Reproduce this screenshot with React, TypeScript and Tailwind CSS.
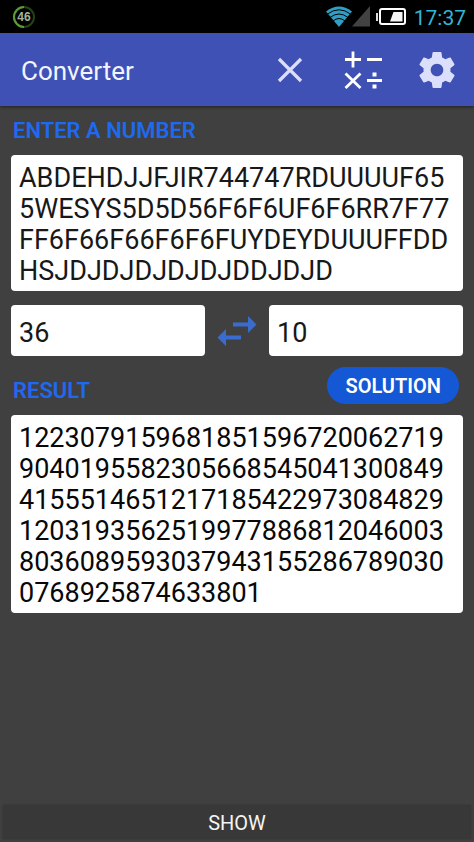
import { useState } from "react";

const NUMBER_TEXT =
  "ABDEHDJJFJIR744747RDUUUUF655WESYS5D5D56F6F6UF6F6RR7F77FF6F66F66F6F6FUYDEYDUUUFFDDHSJDJDJDJDJDJDDJDJD";
const RESULT_TEXT =
  "1223079159681851596720062719904019558230566854504130084941555146512171854229730848291203193562519977886812046003803608959303794315528678903007689258746338" +
  "01";

function StatusBar() {
  return (
    <div className="flex h-[33px] shrink-0 items-center justify-between bg-black pr-2 pl-3">
      <svg className="size-6" viewBox="0 0 24 24" role="img" aria-label="46 percent">
        <circle cx="12" cy="12" r="10" fill="none" stroke="#234315" strokeWidth="2" />
        <path d="M12 22a10 10 0 0 1 0-20" fill="none" stroke="#5c9c34" strokeWidth="2" />
        <text
          x="12"
          y="16"
          textAnchor="middle"
          className="fill-[#a3b596] font-['Liberation_Sans',sans-serif] text-[12px] font-bold"
        >
          46
        </text>
      </svg>
      <div className="flex items-center">
        <svg className="h-[22px] w-[26px]" viewBox="0 0 26 22" aria-hidden="true">
          <path d="M0 5.500Q13-4.500 26 5.500L13 21Z" fill="#2f9dc4" />
          <path
            d="M1.500 8Q13-.5 24.500 8M4 11.500Q13 4.500 22 11.500M7 15Q13 10 19 15"
            fill="none"
            stroke="#000"
            strokeWidth="1"
          />
        </svg>
        <svg className="h-[22px] w-[18px]" viewBox="0 0 18 22" aria-hidden="true">
          <path d="M18 0V20.500H0Z" fill="#424242" />
        </svg>
        <svg className="ml-1.5 h-[17px] w-[30px]" viewBox="0 0 30 17" aria-hidden="true">
          <path d="M1 5v8" stroke="#ddd" strokeWidth="2" />
          <rect x="4" y="1" width="25" height="15" rx="2" fill="none" stroke="#fff" strokeWidth="2" />
          <path d="M17.500 4H26.500V13.500H14Z" fill="#f4f4f4" />
        </svg>
        <span className="ml-2 pt-0.5 text-[21px] leading-8 text-[#33b5d8]">17:37</span>
      </div>
    </div>
  );
}

function Header({ onClear }: { onClear: () => void }) {
  return (
    <header className="z-10 flex h-[73px] shrink-0 items-center bg-[#4051b5] pr-[19px] pl-[21px] shadow-[0_1px_3px_rgba(0,0,0,0.5)]">
      <h1 className="flex-1 pt-0.5 text-[26px] leading-8 text-[#f2f5ff]">Converter</h1>
      <button type="button" aria-label="Clear" onClick={onClear} className="mr-[41px]">
        <svg className="size-[26px]" viewBox="0 0 26 26" aria-hidden="true">
          <path d="M2 2 24 24M24 2 2 24" stroke="#dcdffc" strokeWidth="3.200" />
        </svg>
      </button>
      <button type="button" aria-label="Calculator" className="mr-9">
        <svg className="h-[38px] w-[39px]" viewBox="0 0 39 38" aria-hidden="true">
          <path
            d="M1 8.500H17M9 .5V16.500M23 8.500H38M1.500 22.500 16.500 37M16.500 22.500 1.500 37M23 29.500H38"
            stroke="#fff"
            strokeWidth="2.800"
          />
          <path d="M28.500 21.500h4v4h-4zM28.500 33.500h4v4h-4z" fill="#fff" />
        </svg>
      </button>
      <button type="button" aria-label="Settings">
        <svg className="size-[36px]" viewBox="2 2 20 20" aria-hidden="true">
          <path
            fill="#dcdffc"
            d="M19.430 12.980c.04-.32.07-.64.07-.98s-.03-.66-.07-.98l2.110-1.650c.19-.15.24-.42.12-.64l-2-3.460c-.12-.22-.39-.3-.61-.22l-2.490 1c-.52-.4-1.080-.73-1.690-.98l-.38-2.650C14.460 2.180 14.250 2 14 2h-4c-.25 0-.46.18-.49.42l-.38 2.650c-.61.25-1.170.59-1.690.98l-2.490-1c-.23-.09-.49 0-.61.22l-2 3.460c-.13.22-.07.49.12.64l2.110 1.650c-.04.32-.07.65-.07.98s.03.66.07.98l-2.110 1.650c-.19.15-.24.42-.12.64l2 3.460c.12.22.39.3.61.22l2.490-1c.52.4 1.080.73 1.690.98l.38 2.650c.03.24.24.42.49.42h4c.25 0 .46-.18.49-.42l.38-2.650c.61-.25 1.170-.59 1.690-.98l2.490 1c.23.09.49 0 .61-.22l2-3.460c.12-.22.07-.49-.12-.64l-2.110-1.650zM12 15.500c-1.930 0-3.500-1.570-3.500-3.500s1.570-3.500 3.500-3.500 3.500 1.570 3.500 3.500-1.570 3.500-3.500 3.500z"
          />
        </svg>
      </button>
    </header>
  );
}

export default function App() {
  const [value, setValue] = useState(NUMBER_TEXT);
  const [from, setFrom] = useState("36");
  const [to, setTo] = useState("10");

  const swap = () => {
    setFrom(to);
    setTo(from);
  };

  return (
    <div className="flex min-h-screen flex-col bg-[#404040] font-[Roboto,sans-serif]">
      <StatusBar />
      <Header onClear={() => setValue("")} />
      <main className="flex flex-1 flex-col px-[11px]">
        <label
          htmlFor="number"
          className="flex h-[49px] items-center pl-0.5 text-[22px] leading-7 font-semibold text-[#1f69f0]"
        >
          ENTER A NUMBER
        </label>
        <textarea
          id="number"
          rows={4}
          value={value}
          spellCheck={false}
          onChange={(e) => setValue(e.target.value)}
          className="block w-full resize-none overflow-hidden rounded bg-white px-2 pt-2 pb-1 text-[27px] leading-[31px] break-all text-[#181818] outline-none"
        />
        <div className="mt-3.5 flex items-center">
          <input
            aria-label="From base"
            value={from}
            onChange={(e) => setFrom(e.target.value)}
            className="h-[51px] min-w-0 flex-1 rounded bg-white px-2 pt-1 text-[27px] text-[#181818] outline-none"
          />
          <button type="button" aria-label="Swap bases" onClick={swap} className="mx-3">
            <svg className="h-[30px] w-10" viewBox="0 0 40 30" aria-hidden="true">
              <path d="M16 6.500H31V0L39.500 8.500 31 17V10.500H16ZM24 19.500H9V13L.5 21.500 9 30V23.500H24Z" fill="#3a6cd0" />
            </svg>
          </button>
          <input
            aria-label="To base"
            value={to}
            onChange={(e) => setTo(e.target.value)}
            className="h-[51px] min-w-0 flex-1 rounded bg-white px-2 pt-1 text-[27px] text-[#181818] outline-none"
          />
        </div>
        <div className="flex h-[59px] items-center justify-between pr-1 pl-0.5">
          <label
            htmlFor="result"
            className="pt-2.5 text-[22px] leading-7 font-semibold text-[#1f69f0]"
          >
            RESULT
          </label>
          <button
            type="button"
            className="h-[37px] rounded-full bg-[#1558d6] px-[18px] text-[20px] leading-6 font-semibold text-white"
          >
            SOLUTION
          </button>
        </div>
        <output
          id="result"
          htmlFor="number"
          className="block rounded bg-white px-2 pt-2 pb-1 text-[27px] leading-[31px] break-all text-[#080808]"
        >
          {RESULT_TEXT}
        </output>
      </main>
      <footer className="px-[3px] pb-[3px]">
        <button
          type="button"
          className="h-[34px] w-full rounded-xs bg-[#383838] pt-0.5 text-[20px] leading-6 text-[#f4f4f4] shadow-[0_0_2px_rgba(0,0,0,0.3)]"
        >
          SHOW
        </button>
      </footer>
    </div>
  );
}
